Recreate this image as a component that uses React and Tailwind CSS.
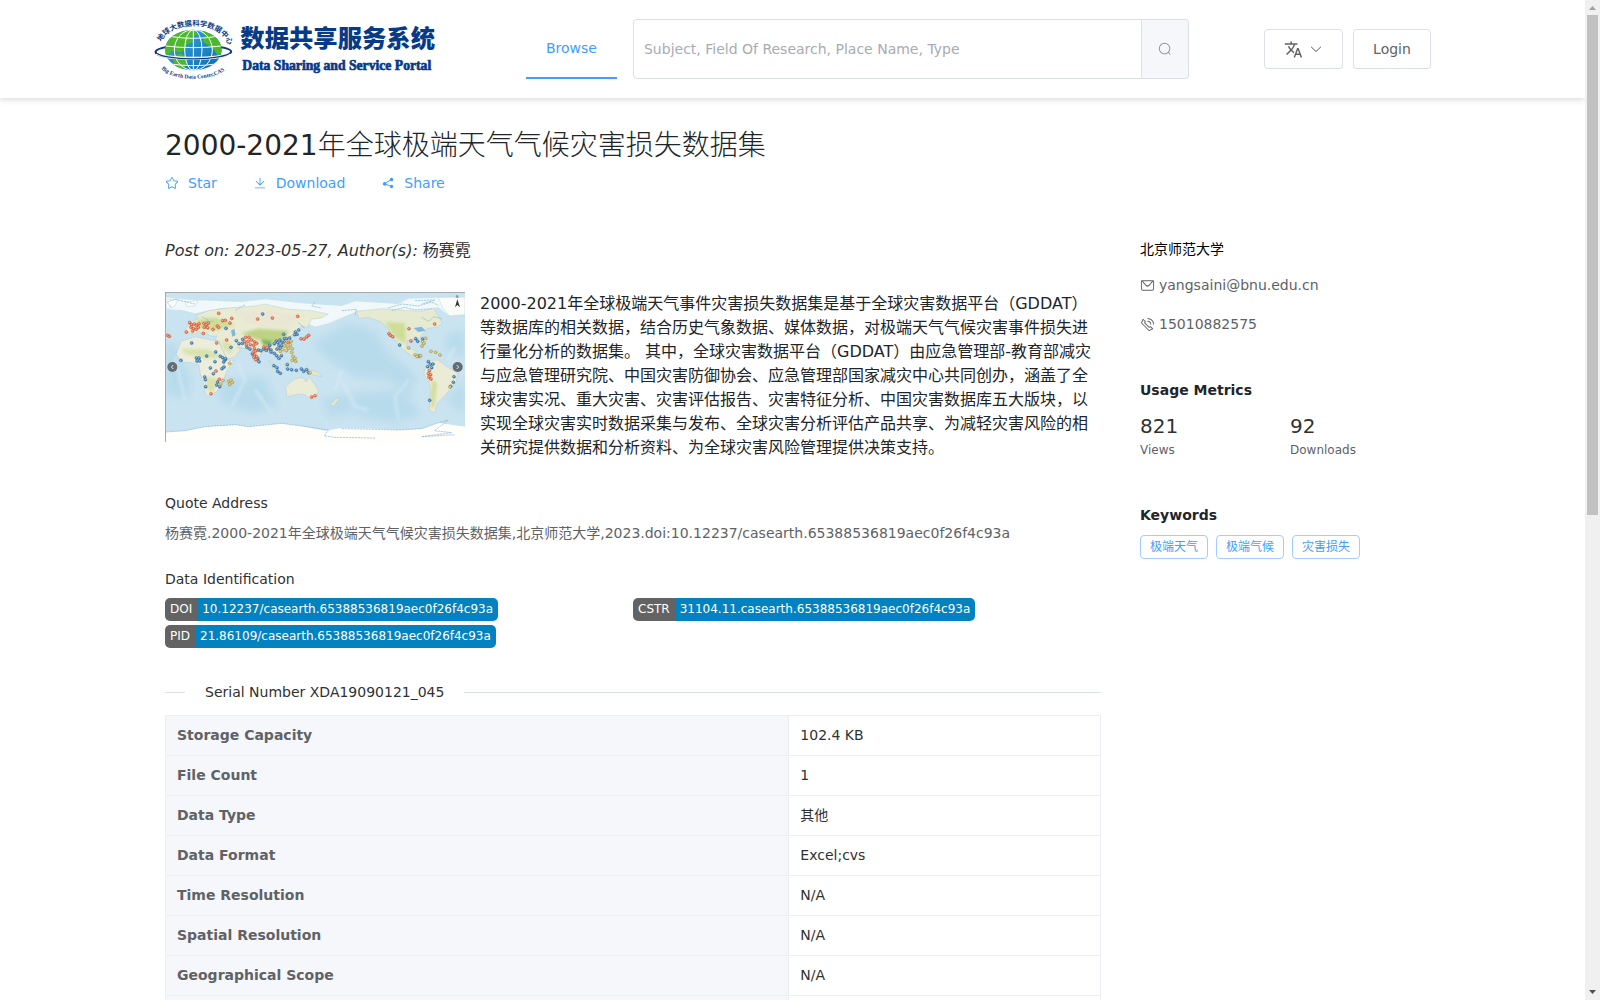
import React from "react";
import { MdTranslate } from "react-icons/md";

const ICONS = {
  star: "m512 747.84 228.16 119.936a6.4 6.4 0 0 0 9.28-6.72l-43.52-254.08 184.512-179.904a6.4 6.4 0 0 0-3.52-10.88l-255.104-37.12L517.76 147.904a6.4 6.4 0 0 0-11.52 0L392.192 379.072l-255.104 37.12a6.4 6.4 0 0 0-3.52 10.88L318.08 606.976l-43.584 254.08a6.4 6.4 0 0 0 9.28 6.72L512 747.84zM313.6 924.48a70.4 70.4 0 0 1-102.144-74.24l37.888-220.928L88.96 472.96A70.4 70.4 0 0 1 128 352.896l221.76-32.256 99.2-200.96a70.4 70.4 0 0 1 126.208 0l99.2 200.96 221.824 32.256a70.4 70.4 0 0 1 39.04 120.064L774.72 629.376l37.888 220.928a70.4 70.4 0 0 1-102.144 74.24L512 820.096l-198.4 104.32z",
  download: "M160 832h704a32 32 0 1 1 0 64H160a32 32 0 1 1 0-64zm384-253.696 236.288-236.352 45.248 45.248L508.8 704 192 387.2l45.248-45.248L480 584.704V128h64v450.304z",
  share: "m679.872 348.8-301.76 188.608a127.808 127.808 0 0 1 5.12 52.16l279.936 104.96a128 128 0 1 1-22.464 59.904l-279.872-104.96a128 128 0 1 1-16.64-166.272l301.696-188.608a128 128 0 1 1 33.92 54.272z",
  search: "m795.904 750.72 124.992 124.928a32 32 0 0 1-45.248 45.248L750.656 795.904a416 416 0 1 1 45.248-45.248zM480 832a352 352 0 1 0 0-704 352 352 0 0 0 0 704z",
  message: "M128 224v512a64 64 0 0 0 64 64h640a64 64 0 0 0 64-64V224H128zm0-64h768a64 64 0 0 1 64 64v512a128 128 0 0 1-128 128H192A128 128 0 0 1 64 736V224a64 64 0 0 1 64-64zM904 224 656.512 506.88a192 192 0 0 1-289.024 0L120 224h84l210.56 240.704a128 128 0 0 0 192.704 0L818.944 224z",
  phone: "M79.36 432.256 591.744 944.64a32 32 0 0 0 35.2 6.784l253.44-108.544a32 32 0 0 0 9.984-52.032l-153.856-153.92a32 32 0 0 0-36.928-6.016l-69.888 34.944L358.08 394.24l35.008-69.888a32 32 0 0 0-5.952-36.928L233.152 133.568a32 32 0 0 0-52.032 10.048L72.512 397.056a32 32 0 0 0 6.784 35.2zm60.48-29.952 81.536-190.08L325.568 316.48l-24.64 49.216-20.608 41.216 32.576 32.64 271.552 271.552 32.64 32.64 41.216-20.672 49.28-24.576 104.192 104.128-190.08 81.472L139.84 402.304zM512 320v-64a256 256 0 0 1 256 256h-64a192 192 0 0 0-192-192zm0-192V64a448 448 0 0 1 448 448h-64a384 384 0 0 0-384-384z",
  arrowDown: "M831.872 340.864 512 652.672 192.128 340.864a30.592 30.592 0 0 0-42.752 0 29.12 29.12 0 0 0 0 41.6L489.664 714.24a32 32 0 0 0 44.672 0l340.288-331.712a29.12 29.12 0 0 0 0-41.728 30.592 30.592 0 0 0-42.752 0z",
};

function Icon({ name, className }) {
  return (
    <svg viewBox="0 0 1024 1024" fill="currentColor" aria-hidden="true" className={className}>
      <path d={ICONS[name]} />
    </svg>
  );
}

function Logo() {
  return (
    <svg viewBox="42 51 852 192" className="h-16 w-[284px] shrink-0 overflow-visible" role="img" aria-label="Data Sharing and Service Portal">
      <defs>
        <linearGradient id="sea" x1="0" y1="0" x2="1" y2="1">
          <stop offset="0" stopColor="#3aa9dd" />
          <stop offset="1" stopColor="#0a6cb8" />
        </linearGradient>
        <clipPath id="globe"><ellipse cx="160" cy="150" rx="85" ry="61" /></clipPath>
        <path id="topArc" d="M64 126 C88 64 232 58 262 128" />
        <path id="bottomArc" d="M64 206 C100 246 218 246 260 206" />
      </defs>
      <path d="M84 140 C34 148 34 164 84 172 C130 180 190 180 236 172 C286 162 286 148 238 141" fill="none" stroke="#123a80" strokeWidth="6" />
      <ellipse cx="160" cy="150" rx="85" ry="61" fill="url(#sea)" />
      <g clipPath="url(#globe)">
        <path d="M78 170 L70 110 L120 82 L165 88 L172 104 L150 112 L160 124 L140 134 L134 150 L118 158 L100 150 Z" fill="#4db82e" />
        <path d="M96 168 L124 160 L142 176 L136 200 L122 214 L104 196 Z" fill="#4db82e" />
        <path d="M184 92 L232 96 L250 150 L236 172 L222 150 L204 136 L186 124 L196 108 Z" fill="#4db82e" />
        <g fill="none" stroke="#ffffff" strokeWidth="3">
          <path d="M160 88 V212" />
          <ellipse cx="160" cy="150" rx="26" ry="61" />
          <ellipse cx="160" cy="150" rx="57" ry="61" />
          <path d="M95 110 Q160 120 225 110 M78 138 Q160 148 242 138 M92 192 Q160 202 228 192" />
        </g>
      </g>
      <path d="M50 160 C80 180 240 180 270 160" fill="none" stroke="#ffffff" strokeWidth="9" />
      <path d="M46 154 C54 184 264 184 274 154" fill="none" stroke="#123a80" strokeWidth="4" />
      <text fill="#0c3c86" fontSize="22" fontWeight="700" fontFamily="'Noto Sans CJK SC', sans-serif">
        <textPath href="#topArc">地球大数据科学数据中心</textPath>
      </text>
      <text fill="#0c3c86" fontSize="17" fontWeight="700" fontFamily="'Liberation Serif', serif">
        <textPath href="#bottomArc">Big Earth Data Center,CAS</textPath>
      </text>
      <text x="301" y="140" fill="#073a87" fontSize="73" fontWeight="900" fontFamily="'Noto Sans CJK SC', sans-serif">数据共享服务系统</text>
      <text x="307" y="211" fill="#073a87" stroke="#073a87" strokeWidth="2" fontSize="41" fontWeight="700" fontFamily="'Liberation Serif', serif">Data Sharing and Service Portal</text>
    </svg>
  );
}

const RED = [[191,100],[230,115],[203,122],[211,121],[225,129],[308,117],[352,114],[428,109],[187,138],[191,142],[174,148],[145,160],[94,156],[38,166],[43,169],[215,180],[185,189],[104,128],[110,134],[118,132],[125,136],[132,131],[108,142],[116,146],[124,148],[130,142],[113,153],[147,130],[154,134],[160,129],[148,142],[158,143],[272,172],[282,172],[270,185],[280,184],[290,180],[299,186],[286,194],[296,196],[305,190],[274,194],[298,206],[295,216],[302,213],[299,225],[305,230],[297,232],[303,239],[327,200],[336,203],[438,176],[447,177],[455,171],[461,166],[400,187],[762,146],[839,132],[702,161],[706,166],[713,170],[768,183],[823,272],[820,281],[827,284],[822,291],[828,297],[470,351],[480,347],[168,341],[193,298],[183,273]];
const BLUE = [[323,102],[213,145],[110,189],[228,202],[155,228],[182,216],[180,245],[124,234],[132,234],[126,243],[134,243],[78,241],[196,229],[203,233],[210,240],[206,246],[212,236],[201,266],[207,261],[166,264],[175,281],[149,291],[151,299],[152,320],[188,306],[185,315],[194,320],[244,182],[252,191],[263,178],[262,190],[276,202],[285,207],[310,210],[318,212],[326,207],[334,211],[344,196],[340,205],[348,210],[292,222],[308,236],[312,245],[358,191],[364,183],[369,188],[375,180],[381,187],[388,176],[372,197],[380,197],[388,186],[386,163],[395,176],[404,174],[366,207],[376,206],[348,216],[358,220],[365,227],[372,235],[379,227],[421,156],[426,163],[431,150],[419,164],[357,257],[366,263],[368,274],[376,280],[397,254],[398,267],[410,269],[424,271],[439,267],[446,274],[455,269],[461,278],[734,195],[782,176],[788,184],[803,177],[792,228],[820,245],[826,253],[818,260],[830,263],[834,252],[897,290],[895,307],[887,319],[824,361]];
const GOLD = [[389,198],[398,201],[406,195],[401,205],[376,214],[383,208],[393,190],[394,212],[408,184],[412,206],[410,217],[414,229],[420,235],[412,241],[422,244],[465,278],[761,204],[780,224],[786,229],[797,227],[828,214],[842,217],[855,225],[803,185],[807,190],[801,198],[812,175],[885,321],[221,304],[228,301],[224,313],[232,307],[204,301],[197,312],[224,250]];

function Markers({ points, className }) {
  return (
    <g className={className} strokeWidth="1.2">
      {points.map(([x, y]) => (
        <g key={x + "-" + y}>
          <circle cx={x} cy={y} r="4.6" />
          <path d={`M${x - 3} ${y + 1} l5 -3`} stroke="#ffffff" strokeWidth="1.6" />
        </g>
      ))}
    </g>
  );
}

function WorldMap() {
  return (
    <svg viewBox="30 36 900 450" className="h-[150px] w-[300px] shrink-0" role="img" aria-label="Map of extreme weather disasters">
      <defs>
        <filter id="soft" x="-20%" y="-20%" width="140%" height="140%"><feGaussianBlur stdDeviation="12" /></filter>
        <filter id="softLand" x="-20%" y="-20%" width="140%" height="140%"><feGaussianBlur stdDeviation="5" /></filter>
      </defs>
      <rect x="30" y="36" width="900" height="450" fill="#cae3f0" />
      <g filter="url(#soft)" fill="#b8dbec">
        <path d="M470 190 L580 130 L660 150 L700 220 L780 280 L770 350 L700 300 L600 290 L520 240Z" />
        <path d="M180 300 L330 290 L370 380 L290 400 L200 370Z" />
        <path d="M590 340 L740 330 L800 400 L720 430 L610 410Z" />
        <path d="M30 190 L60 190 L110 300 L100 360 L30 340Z" />
        <path d="M500 360 L580 340 L600 400 L520 410Z M880 160 L930 150 V230 L870 210Z M870 360 L930 300 V400Z" />
      </g>
      <g fill="none" stroke="#dceef7" strokeWidth="4" filter="url(#softLand)">
        <path d="M250 250 L270 300 L230 380 M300 330 L350 400 M560 300 L600 380 L640 390 M760 300 L720 350 L730 420 M60 230 L90 360 M540 330 L560 270 M900 200 L880 240" />
      </g>
      <path d="M30 52 L110 60 L260 66 L330 58 L440 70 L560 78 L600 64 L730 72 L760 56 L930 50 V100 L880 105 L850 82 L800 92 L720 96 L610 92 L520 130 L480 140 L420 110 L300 80 L200 84 L120 100 L80 90 L30 88Z" fill="#f4fafb" opacity="0.9" />
      <g stroke="#a3bfca" strokeWidth="1">
        <path d="M98 158 L92 146 L110 124 L130 116 L124 106 L160 92 L205 86 L240 82 L300 78 L330 72 L400 88 L470 92 L520 102 L498 114 L470 118 L456 144 L440 136 L430 150 L424 168 L412 164 L404 170 L412 190 L398 212 L382 216 L378 236 L366 238 L356 220 L346 212 L338 208 L318 220 L310 244 L300 246 L288 212 L270 206 L246 200 L256 210 L240 230 L216 238 L200 206 L194 184 L180 180 L186 168 L166 168 L154 158 L146 166 L132 154 L120 162Z" fill="#e9ebd3" />
        <path d="M78 184 L120 170 L150 176 L190 184 L204 214 L216 240 L238 242 L216 270 L206 300 L186 334 L166 348 L152 344 L146 312 L136 282 L132 254 L110 248 L78 246 L64 222Z" fill="#eceddb" />
        <path d="M222 304 L234 292 L230 314 L220 322Z" fill="#dfe2b4" />
        <path d="M392 320 L418 298 L442 292 L454 306 L462 290 L478 312 L490 332 L484 350 L470 358 L446 342 L422 344 L396 350Z" fill="#ebecd5" />
        <path d="M525 374 L548 352 L552 360 L534 378Z M340 240 L370 270 L376 284 L352 262Z M390 250 L406 246 L404 270 L392 268Z M438 264 L490 276 L500 290 L460 282Z" fill="#e4e8cb" />
        <path d="M604 94 L680 86 L740 90 L800 94 L836 84 L852 112 L862 130 L846 142 L816 146 L804 162 L790 178 L758 180 L754 202 L782 212 L798 236 L782 236 L744 208 L720 180 L700 146 L678 126 L640 112 L612 116Z" fill="#e5ead0" />
        <path d="M818 242 L850 240 L878 262 L908 280 L904 304 L884 330 L866 350 L848 368 L838 398 L822 390 L828 340 L822 304 L806 282Z" fill="#ebecd6" />
        <path d="M850 52 H930 V104 L884 108 L862 82Z M90 66 L130 62 L120 78 L96 80Z M34 58 L70 58 L56 82 L34 86Z" fill="#fafcfa" />
      </g>
      <g filter="url(#softLand)">
        <path d="M258 160 L310 146 L400 152 L394 172 L350 190 L300 176Z" fill="#b9cf7c" opacity="0.9" />
        <path d="M320 178 L352 184 L346 200 L322 192Z" fill="#7fb04c" />
        <path d="M240 96 L340 92 L440 112 L400 140 L280 130Z" fill="#e9e6d4" />
        <path d="M80 206 L160 208 L200 230 L160 236 L90 222Z M150 290 L190 296 L176 336 L158 332Z M196 184 L228 190 L232 220 L208 210Z" fill="#d9e2ab" />
        <path d="M690 126 L750 130 L752 192 L720 172Z M830 300 L846 310 L838 380 L828 384Z M130 118 L180 112 L240 134 L180 152 L120 140Z" fill="#cfdd97" />
      </g>
      <path d="M228 152 L238 146 L242 166 L232 170Z M776 144 L800 140 L812 152 L790 156Z" fill="#7db8e4" />
      <path d="M30 456 L90 452 L150 440 L240 434 L280 440 L380 430 L440 438 L510 452 L560 444 L660 446 L730 450 L800 446 L850 428 L930 440 V486 H30Z" fill="#fffefa" />
      <g fill="none" stroke="#86b6d8" strokeWidth="2" strokeDasharray="7 2">
        <path d="M34 456 L90 452 L150 440 L240 434 L280 440 L380 430 L440 438 L520 450 L508 468 L540 472 L660 474" />
        <path d="M560 446 L660 448 L730 450 L800 446 L850 428 L880 420 L838 452 L890 458 L800 470 L900 464" />
        <path d="M700 84 L740 72 L790 78 L830 66 L850 76 M710 92 L750 82 L780 90 L830 86 M780 62 L840 60 L800 72 M120 72 L60 58 L36 66 L50 84 M480 66 L470 78 L500 84 M270 74 L240 92 M560 92 L604 88 L600 108" />
        <path d="M140 110 L160 120 L150 126 L176 124 M430 128 L450 146 M860 116 L836 110 L822 124 L800 112" />
      </g>
      <Markers points={BLUE} className="fill-[#3f7fb5] stroke-[#2d639a]" />
      <Markers points={GOLD} className="fill-[#d0b64e] stroke-[#8d8a4a]" />
      <Markers points={RED} className="fill-[#ee6a41] stroke-[#b4533c]" />
      <path d="M907 58 L900 82 L907 75 L915 82Z" fill="#333333" />
      <text x="902" y="54" fontSize="11" fill="#444444" fontFamily="'DejaVu Sans', sans-serif">N</text>
      <g fill="#626d73">
        <circle cx="52" cy="261" r="15" />
        <circle cx="908" cy="261" r="15" />
      </g>
      <path d="M55 255 L49 261 L55 267 M905 255 L911 261 L905 267" fill="none" stroke="#ffffff" strokeWidth="2.5" />
      <path d="M30 37.5 H930 M31.5 36 V486" stroke="#a4abb0" strokeWidth="3" />
    </svg>
  );
}

function Header() {
  return (
    <header className="h-[98px] shrink-0 bg-white shadow-[0_2px_6px_rgba(0,0,0,0.14)]">
      <div className="mx-auto flex h-full max-w-[1277px] items-center">
        <Logo />
        <nav className="ml-[88px] h-[60px] border-b-2 border-[#409eff]">
          <a href="#browse" className="flex h-full items-center px-5 text-[#409eff]">Browse</a>
        </nav>
        <form className="ml-4 flex h-[60px] max-w-[556px] flex-1" onSubmit={(e) => e.preventDefault()}>
          <input
            type="text"
            aria-label="Search"
            placeholder="Subject, Field Of Research, Place Name, Type"
            className="min-w-0 flex-1 rounded-l-[4px] border border-[#dcdfe6] px-[10px] text-[#606266] outline-none placeholder:text-[#a8abb2]"
          />
          <button type="submit" aria-label="Submit search" className="flex w-[47px] items-center justify-center rounded-r-[4px] border border-l-0 border-[#dcdfe6] bg-[#f5f7fa] text-[#909399]">
            <Icon name="search" className="size-[14px]" />
          </button>
        </form>
        <div className="ml-auto flex gap-[10px] text-[#606266]">
          <button type="button" aria-label="Language" className="flex h-10 w-[79px] items-center justify-center gap-[6px] rounded-[4px] border border-[#dcdfe6]">
            <MdTranslate className="size-[19px]" />
            <Icon name="arrowDown" className="size-[14px]" />
          </button>
          <button type="button" className="h-10 w-[78px] rounded-[4px] border border-[#dcdfe6]">Login</button>
        </div>
      </div>
    </header>
  );
}

const ACTIONS = [
  { icon: "star", label: "Star" },
  { icon: "download", label: "Download" },
  { icon: "share", label: "Share" },
];

const IDS = [
  { kind: "DOI", value: "10.12237/casearth.65388536819aec0f26f4c93a" },
  { kind: "CSTR", value: "31104.11.casearth.65388536819aec0f26f4c93a" },
  { kind: "PID", value: "21.86109/casearth.65388536819aec0f26f4c93a" },
];

const ROWS = [
  ["Storage Capacity", "102.4 KB"],
  ["File Count", "1"],
  ["Data Type", "其他"],
  ["Data Format", "Excel;cvs"],
  ["Time Resolution", "N/A"],
  ["Spatial Resolution", "N/A"],
  ["Geographical Scope", "N/A"],
  ["", ""],
];

function Article() {
  return (
    <main className="min-w-0 flex-1">
      <p className="mt-11 text-base leading-6 text-[#303133]">
        <em>Post on: 2023-05-27, Author(s): </em>杨赛霓
      </p>
      <div className="mt-[29px] flex gap-[15px]">
        <WorldMap />
        <p className="text-base leading-6 text-[#212529]">
          2000-2021年全球极端天气事件灾害损失数据集是基于全球灾害数据平台（GDDAT）等数据库的相关数据，结合历史气象数据、媒体数据，对极端天气气候灾害事件损失进行量化分析的数据集。 其中，全球灾害数据平台（GDDAT）由应急管理部-教育部减灾与应急管理研究院、中国灾害防御协会、应急管理部国家减灾中心共同创办，涵盖了全球灾害实况、重大灾害、灾害评估报告、灾害特征分析、中国灾害数据库五大版块，以实现全球灾害实时数据采集与发布、全球灾害分析评估产品共享、为减轻灾害风险的相关研究提供数据和分析资料、为全球灾害风险管理提供决策支持。
        </p>
      </div>
      <h2 className="mt-[31px] leading-6 text-[#303133]">Quote Address</h2>
      <p className="mt-[6px] leading-6 text-[#606266]">
        杨赛霓.2000-2021年全球极端天气气候灾害损失数据集,北京师范大学,2023.doi:10.12237/casearth.65388536819aec0f26f4c93a
      </p>
      <h2 className="mt-[22px] leading-6 text-[#303133]">Data Identification</h2>
      <div className="mt-[7px] grid grid-cols-2 gap-y-1 text-xs text-white">
        {IDS.map((id) => (
          <div key={id.kind} className="flex h-[23px] w-fit overflow-hidden rounded-[5px] leading-[23px]">
            <span className="bg-[#636363] px-[5px]">{id.kind}</span>
            <span className="bg-[#0382c0] px-[5px]">{id.value}</span>
          </div>
        ))}
      </div>
      <div className="mt-8 flex items-center gap-5 leading-6 text-[#303133]">
        <span className="h-px w-5 bg-[#dcdfe6]" />
        <h2>Serial Number XDA19090121_045</h2>
        <span className="h-px flex-1 bg-[#dcdfe6]" />
      </div>
      <table className="mt-[11px] w-full table-fixed border-collapse text-left leading-[23px]">
        <tbody>
          {ROWS.map(([label, value]) => (
            <tr key={label} className="h-10">
              <th className="w-2/3 border border-[#ebeef5] bg-[#f5f7fa] px-[11px] py-2 font-bold text-[#606266]">{label}</th>
              <td className="border border-[#ebeef5] px-[11px] py-2 text-[#303133]">{value}</td>
            </tr>
          ))}
        </tbody>
      </table>
    </main>
  );
}

function Sidebar() {
  return (
    <aside className="mt-11 w-[280px] shrink-0">
      <h2 className="leading-5 text-black">北京师范大学</h2>
      <a href="mailto:yangsaini@bnu.edu.cn" className="mt-[14px] flex items-center gap-1 leading-6 text-[#606266]">
        <Icon name="message" className="size-[15px]" />
        yangsaini@bnu.edu.cn
      </a>
      <a href="tel:15010882575" className="mt-[15px] flex items-center gap-1 leading-6 text-[#606266]">
        <Icon name="phone" className="size-[15px]" />
        15010882575
      </a>
      <h2 className="mt-[42px] leading-6 font-bold text-[#212529]">Usage Metrics</h2>
      <dl className="mt-[10px] grid grid-cols-2 gap-x-5">
        {[["Views", "821"], ["Downloads", "92"]].map(([label, value]) => (
          <div key={label} className="flex flex-col-reverse">
            <dt className="text-xs leading-5 text-[#606266]">{label}</dt>
            <dd className="text-xl leading-7 text-[#303133]">{value}</dd>
          </div>
        ))}
      </dl>
      <h2 className="mt-[43px] leading-6 font-bold text-[#212529]">Keywords</h2>
      <div className="mt-2 flex gap-2 text-xs">
        {["极端天气", "极端气候", "灾害损失"].map((word) => (
          <span key={word} className="h-6 rounded-[4px] border border-[#a0cfff] px-[9px] leading-[22px] text-[#409eff]">{word}</span>
        ))}
      </div>
    </aside>
  );
}

function Scrollbar() {
  return (
    <div className="flex w-[15px] shrink-0 flex-col items-center bg-[#f0f0f0]" aria-hidden="true">
      <svg viewBox="0 0 15 15" className="size-[15px] shrink-0"><path d="M4 10h7L7.500 6z" fill="#a0a0a0" /></svg>
      <div className="h-1/2 w-[11px] bg-[#c1c1c1]" />
      <svg viewBox="0 0 15 15" className="mt-auto size-[15px] shrink-0"><path d="M4 5h7L7.500 9z" fill="#505050" /></svg>
    </div>
  );
}

export default function App() {
  return (
    <div className="flex h-screen overflow-hidden bg-white font-['DejaVu_Sans','Noto_Sans_CJK_SC',sans-serif] text-sm">
      <div className="flex min-w-0 flex-1 flex-col">
        <Header />
        <div className="min-h-0 flex-1 overflow-hidden">
          <div className="mx-auto max-w-[1255px] pt-7">
            <h1 className="text-[28px] leading-10 text-[#212529]">
              2000-2021<span className="font-light">年全球极端天气气候灾害损失数据集</span>
            </h1>
            <div className="mt-[5px] flex gap-9 text-[#409eff]">
              {ACTIONS.map((action) => (
                <button key={action.label} type="button" className="flex items-center gap-[9px] leading-6">
                  <Icon name={action.icon} className="size-[14px]" />
                  {action.label}
                </button>
              ))}
            </div>
            <div className="flex gap-[39px]">
              <Article />
              <Sidebar />
            </div>
          </div>
        </div>
      </div>
      <Scrollbar />
    </div>
  );
}
